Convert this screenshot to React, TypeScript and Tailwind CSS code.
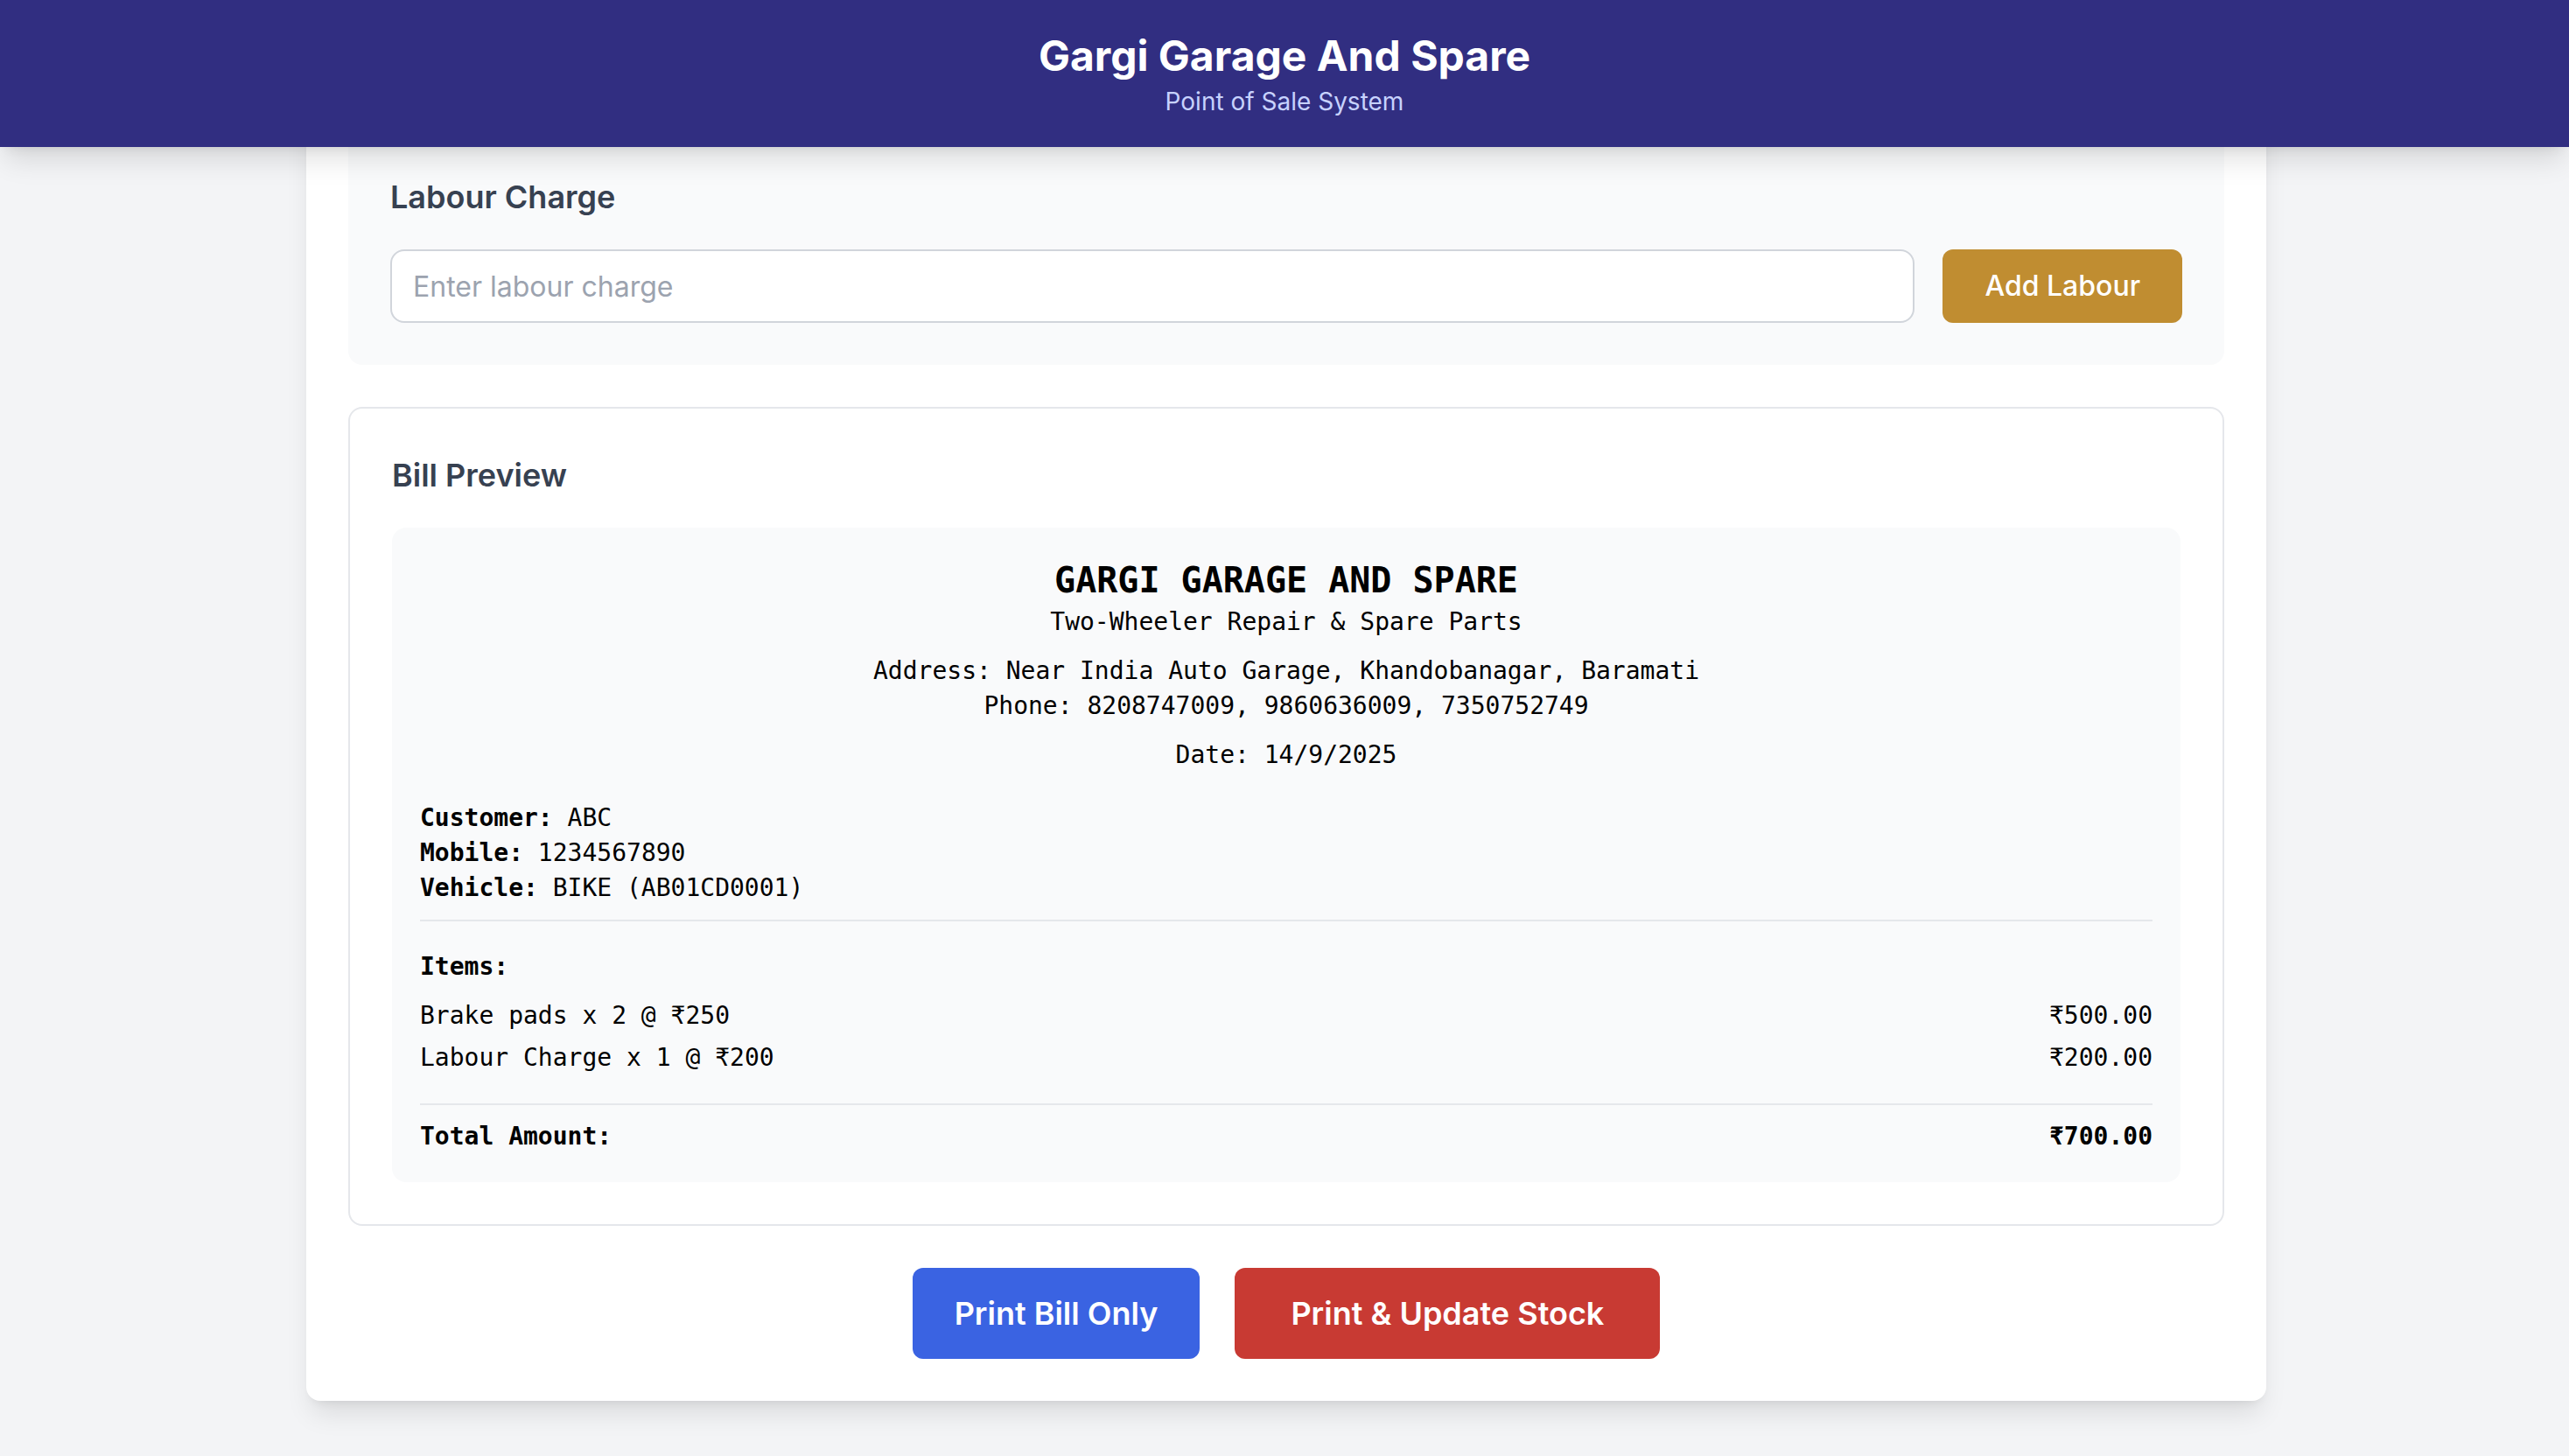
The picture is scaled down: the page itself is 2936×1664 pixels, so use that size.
const items = [
  { name: "Brake pads", qty: 2, rate: 250 },
  { name: "Labour Charge", qty: 1, rate: 200 },
];

function Receipt() {
  const total = items.reduce((s, i) => s + i.qty * i.rate, 0);
  return (
    <div className="rounded-2xl bg-[#f9fafb] p-8 font-['DejaVu_Sans_Mono',monospace] text-[28px] leading-[40px] text-black">
      <div className="mb-8 text-center">
        <div className="text-[40px] font-bold leading-[56px]">GARGI GARAGE AND SPARE</div>
        <div>Two-Wheeler Repair &amp; Spare Parts</div>
        <div className="mt-4">
          <div>Address: Near India Auto Garage, Khandobanagar, Baramati</div>
          <div>Phone: 8208747009, 9860636009, 7350752749</div>
        </div>
        <div className="mt-4">Date: 14/9/2025</div>
      </div>

      <div className="border-b-2 border-[#e5e7eb] pb-4">
        <div>
          <span className="font-bold">Customer:</span> ABC
        </div>
        <div>
          <span className="font-bold">Mobile:</span> 1234567890
        </div>
        <div>
          <span className="font-bold">Vehicle:</span> BIKE (AB01CD0001)
        </div>
      </div>

      <div className="mt-8">
        <div className="mb-4 font-bold">Items:</div>
        <div className="flex flex-col gap-2">
          {items.map((i) => (
            <div key={i.name} className="flex justify-between">
              <span>
                {i.name} x {i.qty} @ ₹{i.rate}
              </span>
              <span>₹{(i.qty * i.rate).toFixed(2)}</span>
            </div>
          ))}
        </div>
      </div>

      <div className="mt-8 flex justify-between border-t-2 border-[#e5e7eb] pt-4 font-bold">
        <span>Total Amount:</span>
        <span>₹{total.toFixed(2)}</span>
      </div>
    </div>
  );
}

export default function App() {
  return (
    <div className="flex h-[1664px] flex-col overflow-hidden bg-[#f3f4f6] font-['Inter',sans-serif]">
      <header className="relative z-10 shrink-0 bg-[#312e81] py-8 text-center shadow-[0_20px_30px_-6px_rgba(0,0,0,0.12),0_8px_12px_-8px_rgba(0,0,0,0.1)]">
        <h1 className="text-[48px] font-bold leading-[64px] text-white">Gargi Garage And Spare</h1>
        <p className="text-[28px] leading-[40px] text-[#c7d2fe]">Point of Sale System</p>
      </header>

      <main className="flex-1 pl-[4px]">
        {/* page is scrolled: top of the card sits under the header */}
        <div className="mx-auto -mt-[67px] w-[2240px] rounded-2xl bg-white p-12 shadow-[0_20px_30px_-6px_rgba(0,0,0,0.1),0_8px_12px_-8px_rgba(0,0,0,0.1)]">
          <section className="rounded-2xl bg-[#f9fafb] p-12">
            <h3 className="mb-8 text-[36px] font-semibold leading-[56px] text-[#374151]">Labour Charge</h3>
            <div className="flex gap-8">
              <input
                type="number"
                placeholder="Enter labour charge"
                className="h-[84px] flex-1 rounded-2xl border-2 border-[#d1d5db] bg-white px-6 text-[32px] text-[#111827] outline-none placeholder:text-[#9ca3af]"
              />
              <button className="h-[84px] rounded-xl bg-[#c08d31] px-12 text-[32px] font-medium text-white">
                Add Labour
              </button>
            </div>
          </section>

          <section className="mt-12 rounded-2xl border-2 border-[#e5e7eb] p-12">
            <h3 className="mb-8 text-[36px] font-semibold leading-[56px] text-[#374151]">Bill Preview</h3>
            <Receipt />
          </section>

          <div className="mt-12 flex justify-center gap-10">
            <button className="h-[104px] rounded-xl bg-[#3a63e2] px-12 text-[36px] font-semibold text-white">
              Print Bill Only
            </button>
            <button className="h-[104px] rounded-xl bg-[#c83a33] px-16 text-[36px] font-semibold text-white">
              Print &amp; Update Stock
            </button>
          </div>
        </div>
      </main>
    </div>
  );
}
